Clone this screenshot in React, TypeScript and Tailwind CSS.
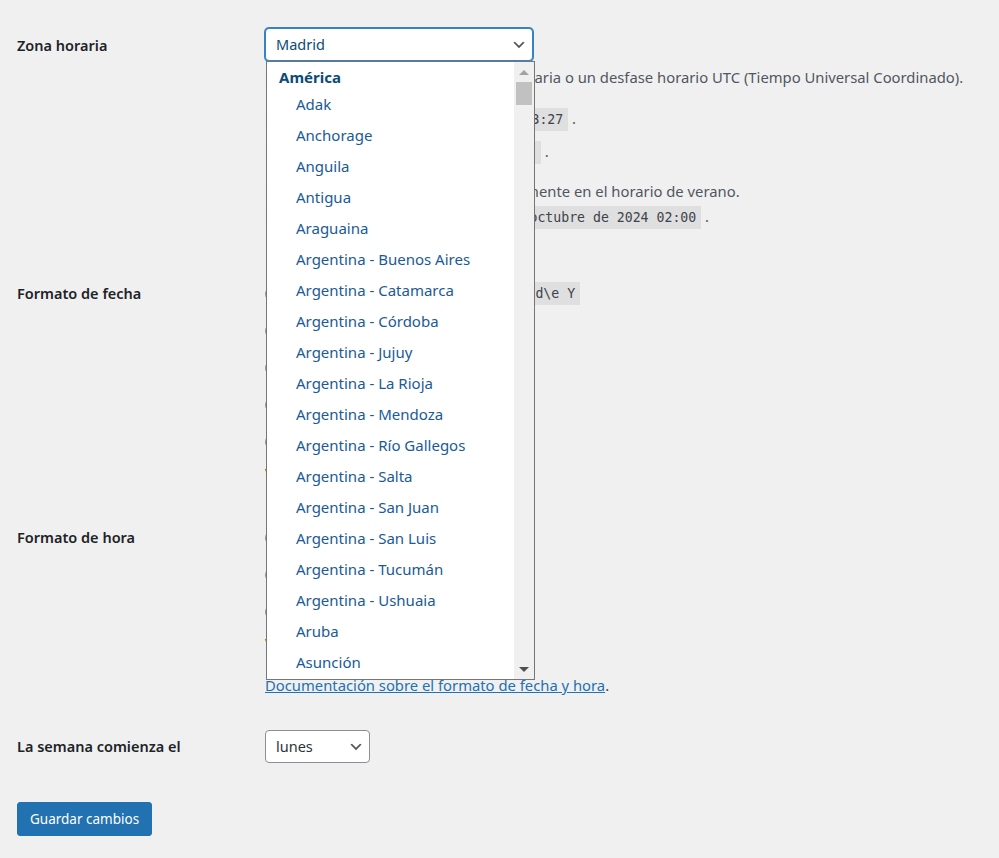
import React from 'react';

const tzItems = [
  'Adak',
  'Anchorage',
  'Anguila',
  'Antigua',
  'Araguaina',
  'Argentina - Buenos Aires',
  'Argentina - Catamarca',
  'Argentina - Córdoba',
  'Argentina - Jujuy',
  'Argentina - La Rioja',
  'Argentina - Mendoza',
  'Argentina - Río Gallegos',
  'Argentina - Salta',
  'Argentina - San Juan',
  'Argentina - San Luis',
  'Argentina - Tucumán',
  'Argentina - Ushuaia',
  'Aruba',
  'Asunción',
];

const dateFormats = [
  { label: '29 de octubre de 2024', code: 'j \\d\\e F \\d\\e Y' },
  { label: '2024-10-29', code: 'Y-m-d' },
  { label: '10/29/2024', code: 'm/d/Y' },
  { label: '29/10/2024', code: 'd/m/Y' },
  { label: 'Personalizado:', code: '' },
];

const timeFormats = [
  { label: '10:23', code: 'H:i' },
  { label: '10:23 am', code: 'g:i a' },
  { label: 'Personalizado:', code: '' },
];

function Chevron() {
  return (
    <svg width="16" height="16" viewBox="0 0 20 20" className="shrink-0">
      <path d="M5 6l5 5 5-5 2 1-7 7-7-7 2-1z" fill="#555" />
    </svg>
  );
}

function Code({ children }: { children: React.ReactNode }) {
  return (
    <code className="inline-block h-[23px] px-[5px] leading-[23px] bg-[#dfdfe0] text-[#3c434a] font-['DejaVu_Sans_Mono',monospace] text-[13.2px]">
      {children}
    </code>
  );
}

function Radio({ label, code }: { label: string; code: string }) {
  return (
    <div className="h-[37px] flex items-center">
      <span className="w-4 h-4 rounded-full border border-[#8c8f94] bg-white mr-2 shrink-0" />
      <span className="inline-block w-[162px] text-[#3c434a] whitespace-nowrap">{label}</span>
      {code && <Code>{code}</Code>}
    </div>
  );
}

function TimezoneList() {
  return (
    <div className="absolute left-[266px] top-[61px] w-[269px] h-[619px] bg-white border border-[#767676] flex">
      <div className="flex-1 overflow-hidden text-[15px] font-['Noto_Sans',sans-serif] text-[#1a5a96]">
        <div className="h-[27px] pt-[3px] pl-3 font-bold text-[#0a4b78] leading-[24px]">América</div>
        {tzItems.map((item) => (
          <div key={item} className="h-[31px] leading-[31px] pl-[29px] whitespace-nowrap">
            {item}
          </div>
        ))}
      </div>
      <div className="w-[20px] bg-[#f0f0f0] flex flex-col items-center">
        <div className="h-[20px] flex items-center justify-center">
          <div className="w-0 h-0 border-l-[5px] border-r-[5px] border-b-[5px] border-l-transparent border-r-transparent border-b-[#a3a3a3]" />
        </div>
        <div className="w-[16px] h-[23px] bg-[#c1c1c1]" />
        <div className="flex-1" />
        <div className="h-[20px] flex items-center justify-center">
          <div className="w-0 h-0 border-l-[5px] border-r-[5px] border-t-[5px] border-l-transparent border-r-transparent border-t-[#505050]" />
        </div>
      </div>
    </div>
  );
}

export default function App() {
  return (
    <div className="relative w-full min-h-[858px] bg-[#f0f0f1] pl-[17px] pt-[28px] font-['Noto_Sans',sans-serif] text-[14.8px] text-[#3c434a]">
      {/* Zona horaria */}
      <div className="flex">
        <div className="w-[248px] h-[35px] flex items-center font-semibold text-[#1d2327] text-[14.5px]">
          Zona horaria
        </div>
        <div className="flex flex-col">
          <div className="w-[268px] h-[33px] bg-white border border-[#3582c4] shadow-[0_0_0_1px_#3582c4] rounded-[4px] flex items-center justify-between pl-[10px] pr-[5px] text-[14.5px] text-[#0a4b78]">
            <span>Madrid</span>
            <Chevron />
          </div>
          <p className="mt-[5px] leading-[22px] text-[#50575e] whitespace-nowrap">
            Elige una ciudad en tu misma zona horaria o un desfase horario UTC (Tiempo Universal Coordinado).
          </p>
          <p className="mt-[19px] h-[23px] leading-[23px] text-[#50575e] whitespace-nowrap">
            La hora universal es <Code>2024-10-29 10:23:27</Code> .
          </p>
          <p className="mt-[10px] h-[23px] leading-[23px] text-[#50575e] whitespace-nowrap">
            La hora local es&nbsp; <Code>2024-10-29 11:23:27</Code> .
          </p>
          <p className="mt-[17px] leading-[22px] text-[#50575e] whitespace-nowrap">
            Esta zona horaria se encuentra actualmente en el horario de verano.
          </p>
          <p className="mt-[3px] h-[23px] leading-[23px] text-[#50575e] whitespace-nowrap">
            La hora estándar comienza el: <Code>27 de octubre de 2024 02:00</Code> .
          </p>
        </div>
      </div>

      {/* Formato de fecha */}
      <div className="flex mt-[47px]">
        <div className="w-[248px] h-[37px] flex items-center font-semibold text-[#1d2327] text-[14.5px]">
          Formato de fecha
        </div>
        <div className="flex flex-col">
          {dateFormats.map((f) => (
            <Radio key={f.label} label={f.label} code={f.code} />
          ))}
          <p className="mt-[2px] leading-[22px] whitespace-nowrap">
            <strong className="text-[#b26200]">Vista previa:</strong> 29 de octubre de 2024
          </p>
        </div>
      </div>

      {/* Formato de hora */}
      <div className="flex mt-[35px]">
        <div className="w-[248px] h-[37px] flex items-center font-semibold text-[#1d2327] text-[14.5px]">
          Formato de hora
        </div>
        <div className="flex flex-col">
          {timeFormats.map((f) => (
            <Radio key={f.label} label={f.label} code={f.code} />
          ))}
          <p className="mt-[2px] leading-[22px] whitespace-nowrap">
            <strong className="text-[#b26200]">Vista previa:</strong> 10:23
          </p>
          <p className="mt-[20px] leading-[22px] whitespace-nowrap">
            <a href="#" className="text-[#2271b1] underline">
              Documentación sobre el formato de fecha y hora
            </a>
            .
          </p>
        </div>
      </div>

      {/* La semana comienza el */}
      <div className="flex mt-[34px]">
        <div className="w-[248px] h-[33px] flex items-center font-semibold text-[#1d2327] text-[14.5px]">
          La semana comienza el
        </div>
        <div className="w-[105px] h-[33px] bg-white border border-[#8c8f94] rounded-[4px] flex items-center justify-between pl-[10px] pr-[5px] text-[14.5px] text-[#2c3338]">
          <span>lunes</span>
          <Chevron />
        </div>
      </div>

      <button className="mt-[39px] h-[34px] px-3 bg-[#2271b1] text-white text-[13.5px] rounded-[3px] border border-[#2271b1]">
        Guardar cambios
      </button>

      <TimezoneList />
    </div>
  );
}
